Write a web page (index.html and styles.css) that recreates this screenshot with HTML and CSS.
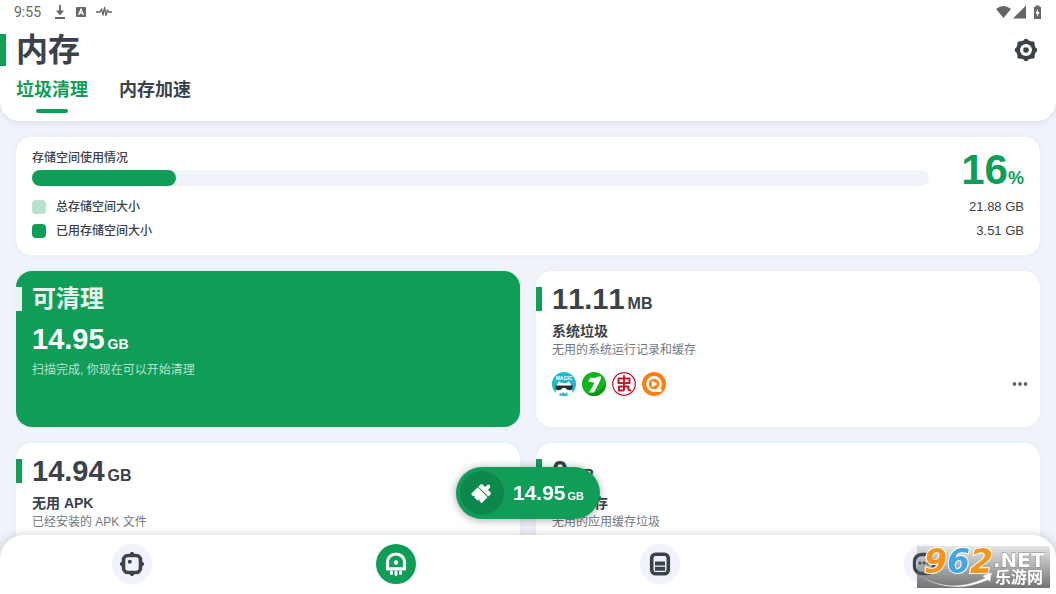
FILE: index.html
```html
<!DOCTYPE html>
<html lang="zh-CN">

<head>
    <meta charset="UTF-8">
    <meta name="viewport" content="width=device-width, initial-scale=1.0">
    <title>内存</title>
    <link rel="stylesheet" href="styles.css">
</head>

<body>
    <header class="header">
        <div class="status-bar">
            <span class="time">9:55</span>
            <svg class="status-icon" width="12" height="14" viewBox="0 0 12 14">
                <path d="M6 0v7M1 13h10" stroke="#666" stroke-width="1.8" fill="none"/>
                <path d="M2 5.500h8L6 10.500z" fill="#666"/>
            </svg>
            <svg class="status-icon" width="10" height="10" viewBox="0 0 10 10">
                <rect width="10" height="10" rx="1" fill="#666"/>
                <path d="M2.500 8L5 2.200 7.500 8M3.500 6h3" stroke="#fff" stroke-width="1.300" fill="none"/>
            </svg>
            <svg class="status-icon" width="16" height="12" viewBox="0 0 16 12">
                <path d="M0 6h4l1.500-3 1.500 6L8.500 1.500l1.500 8L11.500 4l1 2H16" stroke="#666" stroke-width="1.300" fill="none" stroke-linejoin="round"/>
            </svg>
            <svg class="status-right" width="46" height="14" viewBox="0 0 46 14">
                <path d="M0 4Q7.500-2 15 4L7.500 13z" fill="#666"/>
                <path d="M17 13.500L30 .5v13z" fill="#666"/>
                <path d="M38 2h1.500V.5h4V2H45v12h-7z" fill="#666"/>
                <path d="M41.800 3.500L39.500 8.500h1.500V12L43.500 7h-1.700z" fill="#fff"/>
            </svg>
        </div>
        <div class="title-row">
            <h1>内存</h1>
            <button class="settings-btn" aria-label="设置">
                <svg width="24" height="24" viewBox="0 0 24 24" fill="#3b424a">
                    <circle cx="12" cy="12" r="10"/>
                    <circle cx="12" cy="3" r="2.300"/>
                    <circle cx="12" cy="21" r="2.300"/>
                    <circle cx="3" cy="12" r="2.300"/>
                    <circle cx="21" cy="12" r="2.300"/>
                    <circle cx="5.800" cy="5.800" r="2.500"/>
                    <circle cx="18.200" cy="5.800" r="2.500"/>
                    <circle cx="5.800" cy="18.200" r="2.500"/>
                    <circle cx="18.200" cy="18.200" r="2.500"/>
                    <circle cx="12" cy="12" r="6" fill="#fff"/>
                    <circle cx="12" cy="12" r="2.800"/>
                </svg>
            </button>
        </div>
        <div class="tabs">
            <button class="tab active">垃圾清理</button>
            <button class="tab">内存加速</button>
        </div>
    </header>

    <main class="content">
        <section class="card storage">
            <div class="usage">
                <div class="usage-bar">
                    <h2>存储空间使用情况</h2>
                    <div class="track">
                        <div class="fill" style="width: 16%"></div>
                    </div>
                </div>
                <p class="percent">16<small>%</small></p>
            </div>
            <ul class="legend">
                <li><i class="swatch total"></i>总存储空间大小<span>21.88 GB</span></li>
                <li><i class="swatch used"></i>已用存储空间大小<span>3.51 GB</span></li>
            </ul>
        </section>

        <div class="grid">
            <section class="card item green">
                <h2 class="marked">可清理</h2>
                <p class="size">14.95<small>GB</small></p>
                <p class="desc">扫描完成, 你现在可以开始清理</p>
            </section>

            <section class="card item">
                <p class="size marked">11.11<small>MB</small></p>
                <h3>系统垃圾</h3>
                <p class="desc">无用的系统运行记录和缓存</p>
                <div class="apps">
                    <svg width="24" height="24" viewBox="0 0 24 24">
                        <clipPath id="round"><circle cx="12" cy="12" r="12"/></clipPath>
                        <g clip-path="url(#round)">
                            <rect width="24" height="24" fill="#22b9c9"/>
                            <path d="M3 24L5 13l2-4 2 2h6l2-2 2 4 2 11z" fill="#fff"/>
                            <path d="M7 24l1-3 2 1 1-2 2 2 2-2 1 4z" fill="#22b9c9"/>
                            <path d="M3 13.500h18l-1 4q-4 2-6.500-1.500h-3Q8 19.500 4 17.500z" fill="#263238"/>
                            <text x="12" y="7.500" text-anchor="middle" class="magic">MAGIC</text>
                        </g>
                    </svg>
                    <svg width="24" height="24" viewBox="0 0 24 24">
                        <circle cx="12" cy="12" r="12" fill="#10b51a"/>
                        <path d="M5 21.700A12 12 0 0 0 24 12Q16 22 5 21.700z" fill="#0b9414"/>
                        <path d="M6 9.500L8.500 5.500l4 .5L18.500 4l.5 2.500L16 13l-4 7.500H7L12.500 11l-3-1z" fill="#fff"/>
                    </svg>
                    <svg width="24" height="24" viewBox="0 0 24 24" fill="none" stroke="#c8192e">
                        <circle cx="12" cy="12" r="11.300" fill="#fff" stroke-width="1.200"/>
                        <path d="M6.500 6.500h11V11h-11zM12 4v13M7 14.500h9.500M7 14.500v4h4.500M12 14.500v3M16.500 14.500q-1 4 2 4" stroke-width="2" stroke-linejoin="round" stroke-linecap="round"/>
                    </svg>
                    <svg width="24" height="24" viewBox="0 0 24 24">
                        <circle cx="12" cy="12" r="12" fill="#ff7f0e"/>
                        <circle cx="12" cy="12" r="6.600" fill="none" stroke="#fff" stroke-width="2.600"/>
                        <path d="M13 17h6.500v2.900H13z" fill="#fff"/>
                        <path d="M9.800 8.600l5.700 3.400-5.700 3.400z" fill="#fff"/>
                    </svg>
                    <button class="more-btn" aria-label="更多">
                        <svg width="16" height="16" viewBox="0 0 16 16" fill="#5f656b">
                            <circle cx="2.500" cy="8" r="1.900"/>
                            <circle cx="8" cy="8" r="1.900"/>
                            <circle cx="13.500" cy="8" r="1.900"/>
                        </svg>
                    </button>
                </div>
            </section>

            <section class="card item">
                <p class="size marked">14.94<small>GB</small></p>
                <h3>无用 APK</h3>
                <p class="desc">已经安装的 APK 文件</p>
            </section>

            <section class="card item">
                <p class="size marked">0<small>KB</small></p>
                <h3>应用缓存</h3>
                <p class="desc">无用的应用缓存垃圾</p>
            </section>
        </div>
    </main>

    <button class="clean-btn">
        <span class="clean-icon">
            <svg width="22" height="22" viewBox="0 0 22 22" fill="#fff">
                <g transform="rotate(45 11 11)">
                    <path d="M9 2a2 2 0 0 1 4 0v2.500h3.500Q18 4.500 18 6v3H4V6q0-1.500 1.500-1.500H9z"/>
                    <path d="M4 10h14v8.500h-3.500V16L13 19.500H8.500L8 17.500l-1 2H4z"/>
                </g>
            </svg>
        </span>
        <span class="clean-size">14.95<small>GB</small></span>
    </button>

    <nav class="bottom-nav">
        <button class="nav-btn" aria-label="首页">
            <svg width="24" height="24" viewBox="0 0 24 24">
                <rect x="3.500" y="3.500" width="17" height="17" rx="4.500" fill="none" stroke="#3b424a" stroke-width="3.600"/>
                <path d="M10 1.500q2-2.500 4 0zM10 22.500q2 2.500 4 0zM1.500 10q-2.500 2 0 4zM22.500 10q2.500 2 0 4z" fill="#3b424a" stroke="#3b424a"/>
                <circle cx="9.800" cy="9.800" r="2" fill="#3b424a"/>
            </svg>
        </button>
        <button class="nav-btn active" aria-label="内存">
            <svg width="24" height="24" viewBox="0 0 24 24">
                <path d="M3.500 17V10a8.500 8 0 0 1 17 0v7z" fill="none" stroke="#fff" stroke-width="3.200" stroke-linejoin="round"/>
                <circle cx="12" cy="10.500" r="2.200" fill="#fff"/>
                <path d="M3 15.500h18v2.500H3z" fill="#fff"/>
                <path d="M7.500 20v1.500M12 20v2.500M16.500 20v1.500" stroke="#fff" stroke-width="3" stroke-linecap="round"/>
            </svg>
        </button>
        <button class="nav-btn" aria-label="存储">
            <svg width="24" height="24" viewBox="0 0 24 24">
                <rect x="3.700" y="2.200" width="16.600" height="19.600" rx="4" fill="none" stroke="#3b424a" stroke-width="3.600"/>
                <path d="M7 9.500h10v4H7zM7 14.800h10v4H7z" fill="#3b424a"/>
            </svg>
        </button>
        <button class="nav-btn" aria-label="更多">
            <svg width="24" height="24" viewBox="0 0 24 24">
                <rect x="2.500" y="2.500" width="19" height="19" rx="7" fill="none" stroke="#3b424a" stroke-width="3.400"/>
                <g fill="#3b424a">
                    <circle cx="8" cy="11" r="1.500"/>
                    <circle cx="12" cy="11" r="1.500"/>
                    <circle cx="16" cy="11" r="1.500"/>
                </g>
            </svg>
        </button>
    </nav>

    <div class="watermark">
        <svg width="133" height="42" viewBox="0 0 133 42">
            <path d="M3 30Q34 48 68 32l-3-2 10-4-2 10-2-2Q34 50 3 30z" fill="#fff" stroke="#999" stroke-width=".5"/>
            <g class="wm-number">
                <text x="7" y="27" fill="#f7941d">9</text>
                <text x="30" y="27" fill="#45a5e0">6</text>
                <text x="53" y="27" fill="#f7941d">2</text>
            </g>
            <text x="76" y="21" class="wm-net">.NET</text>
            <text x="78" y="37" class="wm-name">乐游网</text>
        </svg>
    </div>
</body>

</html>
```

FILE: styles.css
```css
* {
    margin: 0;
    padding: 0;
    box-sizing: border-box;
}

body {
    height: 100vh;
    background: #f0f4fa;
    color: #3b424a;
    font-family: "Liberation Sans", "Noto Sans CJK SC", sans-serif;
    font-size: 12px;
    font-kerning: none;
    overflow: hidden;
}

button {
    border: none;
    background: none;
    font-family: inherit;
    color: inherit;
    cursor: pointer;
}

svg {
    display: block;
}

ul {
    list-style: none;
}

small {
    line-height: 0;
}

/* header */
.header {
    background: white;
    border-radius: 0 0 20px 20px;
    box-shadow: 0 1px 6px rgba(40, 60, 90, 0.12);
}

.status-bar {
    display: flex;
    align-items: center;
    gap: 10px;
    height: 24px;
    padding: 0 14px;
}

.time {
    margin-right: 3px;
    font-family: Roboto, sans-serif;
    font-size: 14px;
    color: #666;
}

.status-right {
    margin-left: auto;
}

.title-row {
    display: flex;
    align-items: center;
    justify-content: space-between;
    padding: 10px 18px 10px 0;
}

.title-row h1 {
    padding-left: 10px;
    border-left: 6px solid #109d58;
    font-size: 32px;
    line-height: 32px;
}

.tabs {
    display: flex;
    gap: 31px;
    padding: 0 16px 8px;
}

.tab {
    font-size: 18px;
    font-weight: bold;
    line-height: 28px;
}

.tab::after {
    content: "";
    display: block;
    width: 32px;
    height: 4px;
    margin: 5px auto 0;
    border-radius: 2px;
}

.tab.active {
    color: #109d58;
}

.tab.active::after {
    background: #109d58;
}

/* cards */
.content {
    padding: 16px;
}

.card {
    background: white;
    border-radius: 16px;
    box-shadow: 0 0 6px rgba(40, 60, 90, 0.05);
}

.storage {
    padding: 12px 16px;
    margin-bottom: 16px;
}

.usage {
    display: flex;
    gap: 32px;
}

.usage-bar {
    flex: 1;
}

.usage h2 {
    font-size: 12px;
    font-weight: 500;
    line-height: 18px;
}

.track {
    height: 16px;
    margin-top: 3px;
    border-radius: 8px;
    background: #f0f4fa;
}

.fill {
    height: 100%;
    border-radius: 8px;
    background: #109d58;
}

.percent {
    color: #109d58;
    font-size: 42px;
    font-weight: bold;
    line-height: 42px;
}

.percent small {
    font-size: 18px;
}

.legend {
    margin-top: 4px;
    font-weight: 500;
}

.legend li {
    display: flex;
    align-items: center;
    line-height: 24px;
}

.legend span {
    margin-left: auto;
    font-size: 13px;
}

.swatch {
    width: 14px;
    height: 14px;
    margin-right: 10px;
    border-radius: 4px;
    background: #109d58;
}

.swatch.total {
    background: #b7e2cd;
}

.grid {
    display: grid;
    grid-template-columns: 1fr 1fr;
    gap: 16px;
}

.item {
    min-height: 156px;
    padding: 16px 12px 16px 0;
}

.item > * {
    padding-left: 16px;
}

.item .marked {
    padding-left: 10px;
    border-left: 6px solid #109d58;
}

.item h2 {
    font-size: 24px;
    line-height: 24px;
}

.item h3 {
    margin-top: 10px;
    font-size: 14px;
    line-height: 20px;
}

.size {
    font-size: 29px;
    font-weight: bold;
    line-height: 24px;
}

.size small {
    margin-left: 3px;
    font-size: 16px;
}

.desc {
    color: #71777e;
    line-height: 18px;
}

.green {
    background: #109d58;
    color: white;
}

.green .marked {
    border-color: #e5f5ed;
    color: #e5f5ed;
}

.green .size {
    margin: 16px 0 10px;
}

.green .size small {
    font-size: 14px;
}

.green .desc {
    color: #b7e2cd;
}

.apps {
    display: flex;
    align-items: center;
    gap: 6px;
    margin-top: 13px;
}

.magic {
    fill: white;
    font-size: 5px;
    font-weight: bold;
}

.more-btn {
    margin-left: auto;
}

/* floating clean button */
.clean-btn {
    position: fixed;
    left: 50%;
    bottom: 75px;
    transform: translateX(-50%);
    display: flex;
    align-items: center;
    gap: 9px;
    padding: 4px 16px 4px 4px;
    border-radius: 26px;
    background: #109d58;
    color: white;
    box-shadow: 0 1px 8px rgba(0, 0, 0, 0.35);
}

.clean-icon {
    display: flex;
    align-items: center;
    justify-content: center;
    width: 44px;
    height: 44px;
    border-radius: 50%;
    background: #0e874c;
}

.clean-size {
    font-size: 21px;
    font-weight: bold;
}

.clean-size small {
    margin-left: 2px;
    font-size: 11px;
}

/* bottom navigation */
.bottom-nav {
    position: fixed;
    left: 0;
    right: 0;
    bottom: 0;
    display: grid;
    grid-template-columns: repeat(4, 1fr);
    justify-items: center;
    padding: 9px 0 10px;
    border-radius: 24px 24px 0 0;
    background: white;
    box-shadow: 0 0 10px rgba(0, 0, 0, 0.2);
}

.nav-btn {
    display: flex;
    align-items: center;
    justify-content: center;
    width: 40px;
    height: 40px;
    border-radius: 50%;
    background: #f0f4fa;
}

.nav-btn.active {
    background: #109d58;
}

/* site badge */
.watermark {
    position: fixed;
    right: 6px;
    bottom: 6px;
    background: linear-gradient(rgba(90, 90, 90, 0.15), rgba(90, 90, 90, 0.85));
}

.watermark svg {
    overflow: visible;
}

.wm-number {
    font-family: "DejaVu Sans", sans-serif;
    font-size: 33px;
    font-weight: bold;
    font-style: italic;
    stroke: white;
    stroke-width: 2px;
    paint-order: stroke;
}

.wm-net,
.wm-name {
    fill: white;
    stroke: #888;
    stroke-width: 1px;
    paint-order: stroke;
    font-weight: bold;
}

.wm-net {
    font-family: "DejaVu Sans", sans-serif;
    font-size: 20px;
}

.wm-name {
    font-size: 16px;
}
```
